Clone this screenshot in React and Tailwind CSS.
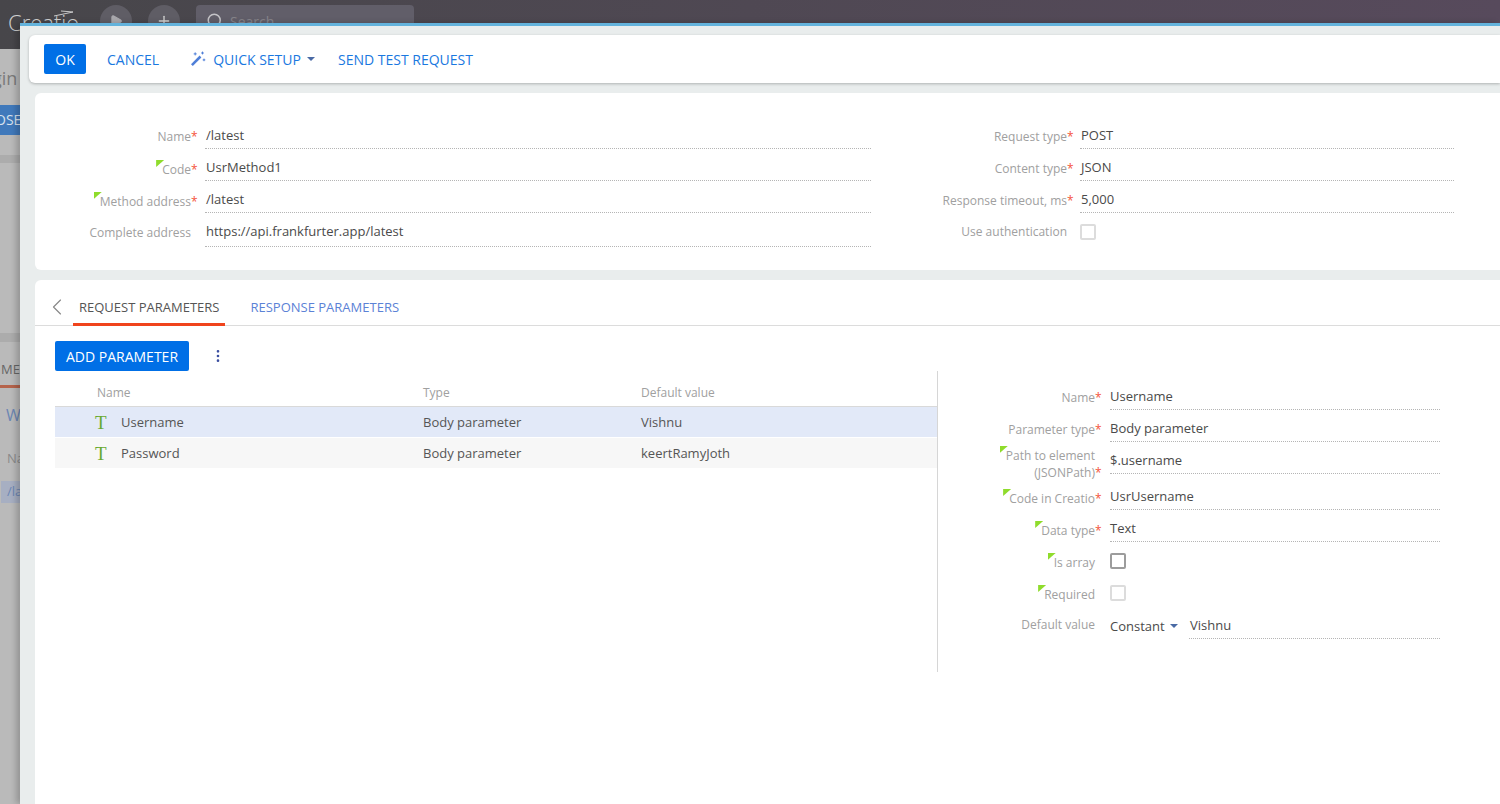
import { ChevronLeft, EllipsisVertical, Play, Plus, Search } from "lucide-react";

const leftFields = [
  { label: "Name", value: "/latest", required: true },
  { label: "Code", value: "UsrMethod1", required: true, marked: true },
  { label: "Method address", value: "/latest", required: true, marked: true },
  { label: "Complete address", value: "https://api.frankfurter.app/latest", tall: true },
];

const rightFields = [
  { label: "Request type", value: "POST", required: true },
  { label: "Content type", value: "JSON", required: true },
  { label: "Response timeout, ms", value: "5,000", required: true },
];

const params = [
  { name: "Username", type: "Body parameter", value: "Vishnu", active: true },
  { name: "Password", type: "Body parameter", value: "keertRamyJoth" },
];

function Corner() {
  return (
    <span className="absolute -left-[6px] -top-[1px] h-[7px] w-[8px] bg-[#8fdc2c] [clip-path:polygon(0_0,100%_0,0_100%)]" />
  );
}

function Label({ marked, required, children }) {
  return (
    <span className="flex items-start justify-end text-right text-[12px] leading-[18px] text-[#a0a0a0]">
      <span className="relative">
        {marked && <Corner />}
        {children}
      </span>
      <span className="w-[6px] text-left text-[#f4553a]">{required ? "*" : ""}</span>
    </span>
  );
}

function Caret() {
  return <span className="h-0 w-0 border-x-[4px] border-t-[4px] border-x-transparent border-t-[#4a6aa5]" />;
}

function Checkbox({ dark }) {
  return <span className={`h-[16px] w-[16px] rounded-[2px] border-2 ${dark ? "border-[#9c9c9c]" : "border-[#dcdcdc]"}`} />;
}

function WandIcon() {
  return (
    <svg width="16" height="16" viewBox="0 0 16 16" className="ml-[31px] text-[#4f7fd8]">
      <path d="M1 13.2 9.6 4.6l1.8 1.8L2.8 15z" fill="currentColor" />
      <path d="M5.2 1.4v3M3.7 2.9h3M12.5 0.6v2.8M11.1 2h2.8M14 7.6v2.6M12.7 8.9h2.6" stroke="currentColor" strokeWidth="1" fill="none" />
    </svg>
  );
}

function LogoSwoosh() {
  return (
    <svg width="20" height="8" viewBox="0 0 20 8" className="absolute left-[46px] top-[4px] text-[#c9c9c9]">
      <path d="M0 7 19 3 7 2" stroke="currentColor" strokeWidth="1" fill="none" />
    </svg>
  );
}

function FormRow({ field }) {
  return (
    <div className={`flex ${field.tall ? "h-[34px]" : "h-[32px]"}`}>
      <div className={`w-[162px] shrink-0 ${field.marked ? "pt-[12px]" : "pt-[11px]"}`}>
        <Label marked={field.marked} required={field.required}>
          {field.label}
        </Label>
      </div>
      <div className="ml-[8px] flex-1 border-b border-dotted border-[#b5b5b5] pl-[1px] pt-[9px] text-[13px] leading-[18px] text-[#4a4a4a]">
        {field.value}
      </div>
    </div>
  );
}

function Background() {
  return (
    <div className="flex h-full flex-col bg-[#bababa]">
      <div className="flex h-[49px] shrink-0 items-start bg-gradient-to-r from-[#47464a] to-[#574a5c] pt-[5px]">
        <div className="relative ml-[8px] w-[92px]">
          <span className="block pt-[2px] text-[22px] font-light leading-[30px] text-[#cfcfcf]">Creatio</span>
          <LogoSwoosh />
        </div>
        <div className="flex h-[32px] w-[32px] items-center justify-center rounded-full bg-[#5f5d65]">
          <Play size={14} className="fill-[#a9a8ad] text-[#a9a8ad]" />
        </div>
        <div className="ml-[16px] flex h-[32px] w-[32px] items-center justify-center rounded-full bg-[#5f5d65]">
          <Plus size={16} className="text-[#d0d0d0]" />
        </div>
        <div className="ml-[16px] flex h-[32px] w-[218px] items-center gap-[6px] rounded bg-[#615e69] px-[10px] text-[14px] text-[#85838a]">
          <Search size={18} className="text-[#c4c3c7]" />
          Search
        </div>
      </div>
      <div className="pt-[17px] text-[18px] leading-[24px] text-[#7a7a7a] -indent-[8px]">gin</div>
      <div className="mt-[15px] h-[30px] bg-[#4079bb] text-[14px] leading-[30px] text-[#d8e2ee] -indent-[5px]">OSE</div>
      <div className="mt-[20px] h-[8px] bg-[#acacac]" />
      <div className="mt-[170px] h-[9px] bg-[#acacac]" />
      <div className="mt-[16px] h-[30px] border-b-[3px] border-[#b5634b] pl-[1px] text-[13px] leading-[22px] text-[#666]">ME</div>
      <div className="ml-[6px] mt-[17px] text-[16px] leading-[20px] text-[#6c86b3]">W</div>
      <div className="ml-[7px] mt-[24px] text-[13px] leading-[18px] text-[#8a8a8a]">Na</div>
      <div className="ml-[1px] mt-[14px] h-[22px] bg-[#a7afc2] pl-[6px] text-[13px] leading-[20px] text-[#6c86b3]">/la</div>
    </div>
  );
}

function Toolbar() {
  return (
    <div className="ml-[9px] mt-[9px] flex h-[48px] shrink-0 items-start rounded-l-[6px] bg-white pl-[15px] pt-[9px] shadow-[0_1px_3px_rgba(0,0,0,0.25)]">
      <button className="h-[30px] w-[42px] rounded-[2px] bg-[#006fe6] text-[14px] font-medium text-white">OK</button>
      <div className="flex h-[30px] items-center">
        <button className="ml-[21px] text-[14px] text-[#1a78e0]">CANCEL</button>
        <WandIcon />
        <button className="ml-[7px] text-[14px] text-[#1a78e0]">QUICK SETUP</button>
        <span className="ml-[6px] flex">
          <Caret />
        </span>
        <button className="ml-[23px] text-[14px] text-[#1a78e0]">SEND TEST REQUEST</button>
      </div>
    </div>
  );
}

function MethodCard() {
  return (
    <div className="ml-[15px] mt-[10px] flex h-[177px] shrink-0 rounded-l-[6px] bg-white pt-[24px]">
      <div className="w-[836px] shrink-0">
        {leftFields.map((field) => (
          <FormRow key={field.label} field={field} />
        ))}
      </div>
      <div className="ml-[47px] w-[536px]">
        {rightFields.map((field) => (
          <div key={field.label} className="flex h-[32px]">
            <div className="w-[155px] shrink-0 pt-[11px]">
              <Label required={field.required}>{field.label}</Label>
            </div>
            <div className="ml-[7px] w-[374px] border-b border-dotted border-[#b5b5b5] pl-[1px] pt-[9px] text-[13px] leading-[18px] text-[#4a4a4a]">
              {field.value}
            </div>
          </div>
        ))}
        <div className="flex h-[34px] items-start">
          <div className="w-[155px] shrink-0 pt-[10px]">
            <Label>Use authentication</Label>
          </div>
          <div className="ml-[7px] mt-[11px] flex">
            <Checkbox />
          </div>
        </div>
      </div>
    </div>
  );
}

function ParamTable() {
  return (
    <div className="w-[903px] shrink-0 pl-[20px]">
      <div className="flex h-[45px] items-center pt-[15px]">
        <button className="h-[30px] w-[134px] rounded-[2px] bg-[#006fe6] text-[14px] font-medium text-white">ADD PARAMETER</button>
        <EllipsisVertical size={16} className="ml-[21px] text-[#3a4ea0]" />
      </div>
      <div className="h-[301px] border-r border-[#d6d6d6] pt-[10px]">
        <div className="flex h-[26px] border-b border-[#d9d9d9] pl-[42px] text-[12px] leading-[24px] text-[#a0a0a0]">
          <span className="w-[326px]">Name</span>
          <span className="w-[218px]">Type</span>
          <span>Default value</span>
        </div>
        {params.map((param) => (
          <div
            key={param.name}
            className={`mb-[1px] flex h-[30px] items-center pt-[1px] text-[13px] text-[#555] ${param.active ? "bg-[#e2e9f8]" : "bg-[#f7f7f7]"}`}
          >
            <span className="ml-[40px] w-[26px] font-['Liberation_Serif',serif] text-[19px] leading-[20px] text-[#69a92f]">T</span>
            <span className="w-[302px]">{param.name}</span>
            <span className="w-[218px]">{param.type}</span>
            <span>{param.value}</span>
          </div>
        ))}
      </div>
    </div>
  );
}

function DetailRow({ label, value, marked, required }) {
  return (
    <div className="flex h-[32px]">
      <div className={`w-[163px] shrink-0 ${marked ? "pt-[12px]" : "pt-[11px]"}`}>
        <Label marked={marked} required={required}>
          {label}
        </Label>
      </div>
      <div className="ml-[9px] w-[330px] border-b border-dotted border-[#b5b5b5] pt-[9px] text-[13px] leading-[18px] text-[#4a4a4a]">
        {value}
      </div>
    </div>
  );
}

function ParamDetails() {
  return (
    <div className="pt-[52px]">
      <DetailRow label="Name" value="Username" required />
      <DetailRow label="Parameter type" value="Body parameter" required />
      <div className="flex h-[32px]">
        <div className="w-[163px] shrink-0 pt-[5px]">
          <div className="flex justify-end pr-[6px] text-[12px] leading-[17px] text-[#a0a0a0]">
            <span className="relative">
              <Corner />
              Path to element
            </span>
          </div>
          <Label required>(JSONPath)</Label>
        </div>
        <div className="ml-[9px] w-[330px] border-b border-dotted border-[#b5b5b5] pt-[9px] text-[13px] leading-[18px] text-[#4a4a4a]">
          $.username
        </div>
      </div>
      <div className="pt-[4px]">
        <DetailRow label="Code in Creatio" value="UsrUsername" required marked />
      </div>
      <DetailRow label="Data type" value="Text" required marked />
      <div className="flex h-[32px] items-start">
        <div className="w-[163px] shrink-0 pt-[12px]">
          <Label marked>Is array</Label>
        </div>
        <div className="ml-[9px] mt-[11px] flex">
          <Checkbox dark />
        </div>
      </div>
      <div className="flex h-[32px] items-start">
        <div className="w-[163px] shrink-0 pt-[12px]">
          <Label marked>Required</Label>
        </div>
        <div className="ml-[9px] mt-[11px] flex">
          <Checkbox />
        </div>
      </div>
      <div className="flex h-[33px]">
        <div className="w-[163px] shrink-0 pt-[10px]">
          <Label>Default value</Label>
        </div>
        <div className="ml-[9px] flex w-[330px]">
          <div className="flex w-[79px] items-center gap-[5px] pt-[7px] text-[13px] leading-[18px] text-[#4a4a4a]">
            Constant
            <Caret />
          </div>
          <div className="flex-1 border-b border-dotted border-[#b5b5b5] pl-[1px] pt-[10px] text-[13px] leading-[18px] text-[#4a4a4a]">
            Vishnu
          </div>
        </div>
      </div>
    </div>
  );
}

function ParamsCard() {
  return (
    <div className="ml-[15px] mt-[10px] flex-1 rounded-tl-[6px] bg-white">
      <div className="flex h-[46px] border-b border-[#dcdcdc] text-[13px] leading-[18px]">
        <ChevronLeft size={28} strokeWidth={1} className="ml-[8px] mt-[13px] text-[#888]" />
        <div className="ml-[2px] h-[46px] border-b-[3px] border-[#f0441c] px-[6px] pt-[18px] text-[#555]">REQUEST PARAMETERS</div>
        <div className="ml-[25px] pt-[18px] text-[#5b82d6]">RESPONSE PARAMETERS</div>
      </div>
      <div className="flex">
        <ParamTable />
        <ParamDetails />
      </div>
    </div>
  );
}

export default function App() {
  return (
    <div className="relative h-[804px] w-[1500px] overflow-hidden font-['Open_Sans',sans-serif]">
      <Background />
      <div className="absolute bottom-0 left-[20px] right-0 top-[23px] flex flex-col border-t-[3px] border-[#63b3dc] bg-[#e9eded] shadow-[-4px_0_6px_rgba(0,0,0,0.2)]">
        <Toolbar />
        <MethodCard />
        <ParamsCard />
      </div>
    </div>
  );
}
